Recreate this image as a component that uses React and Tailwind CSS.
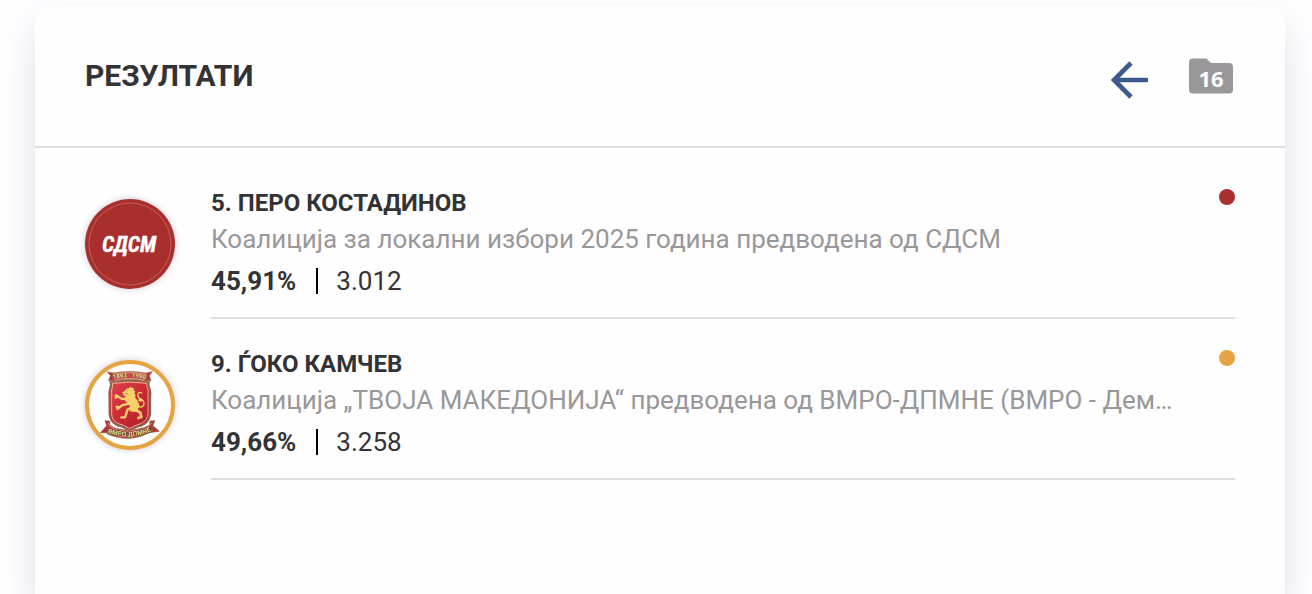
import React from "react";

function SdsmLogo() {
  return (
    <svg viewBox="0 0 90 90" className="size-full" role="img" aria-label="СДСМ">
      <circle cx="45" cy="45" r="45" fill="#a92f2e" />
      <circle cx="45" cy="45" r="41" fill="none" stroke="#cf7f78" strokeWidth="0.6" />
      <text
        x="44"
        y="53"
        textAnchor="middle"
        fill="#fff"
        stroke="#fff"
        strokeWidth="0.4"
        fontFamily="'Roboto Condensed', Roboto, sans-serif"
        fontSize="22"
        fontWeight="700"
        fontStyle="italic"
      >
        СДСМ
      </text>
    </svg>
  );
}

function VmroLogo() {
  return (
    <svg viewBox="30 30 270 270" className="size-full" role="img" aria-label="ВМРО-ДПМНЕ">
      <defs>
        <linearGradient id="shield" x1="0" y1="0" x2="1" y2="1">
          <stop offset="0" stopColor="#e0434a" />
          <stop offset="0.5" stopColor="#c92a35" />
          <stop offset="1" stopColor="#a91f2a" />
        </linearGradient>
        <path id="top-ribbon" d="M112 88Q164 76 214 88" />
        <path id="bottom-ribbon" d="M96 248Q164 273 230 243" />
      </defs>
      <circle cx="165" cy="165" r="129" fill="#fff" stroke="#e3a441" strokeWidth="12" />

      {/* Shield */}
      <path
        d="M106 96Q164 88 222 96Q218 106 225 118Q228 128 226 145V190Q225 216 202 226Q178 231 164 243Q150 231 126 226Q104 216 103 190V145Q101 128 104 118Q110 106 106 96Z"
        fill="url(#shield)"
        stroke="#8a6a52"
        strokeWidth="5"
      />
      <path
        d="M112 100Q164 93 216 100Q213 108 219 120V190Q218 210 200 220Q178 226 164 236Q150 226 128 220Q110 210 110 190V120Q115 108 112 100Z"
        fill="none"
        stroke="#eccfa8"
        strokeWidth="2.5"
      />

      {/* Lion */}
      <g fill="#f8d06a">
        <path d="M151 121l4-5 7-1 3-5 5 3 7 1-1 6 5 5-3 5 4 6-2 6 6 8 6 11 1 11-8 7-14-2-7-8-4-9-8-4-3-11 3-7-8-2 1-5-4-4 5-2Z" />
        <g fill="none" stroke="#f8d06a" strokeWidth="7" strokeLinecap="round" strokeLinejoin="round">
          <path d="M159 146L141 147L127 138M127 138L122 136M127 139L122 143" />
          <path d="M164 161L143 165L132 173M132 173L125 170M132 173L127 177" />
          <path d="M171 171L157 179L154 191L150 202H139" />
          <path d="M184 171L182 180L196 188L199 201L190 204" strokeWidth="8" />
          <path
            d="M190 170Q208 174 207 159Q206 150 198 148Q189 144 188 136Q189 124 200 129"
            strokeWidth="4"
          />
        </g>
        <path d="M169 168L186 166L190 180L180 186L163 184Z" />
        <path d="M199 145l-12 5 9 5 9-3Z" />
      </g>
      <path d="M157 122h2M152 130l6 1" stroke="#9b4028" strokeWidth="2" />

      {/* Top ribbon */}
      <g stroke="#94694a" strokeWidth="2" strokeLinejoin="round">
        <path d="M118 70L97 65L106 77L101 92H118Z" fill="#b83236" />
        <path d="M210 70L232 65L223 77L228 92H210Z" fill="#b83236" />
        <path d="M111 70Q164 59 217 70L212 94Q164 83 116 94Z" fill="#c7454a" />
      </g>
      <path d="M114 73Q164 63 214 73M119 91Q164 80 209 91" fill="none" stroke="#ecd297" strokeWidth="2" />
      <text
        fill="#f7e0a2"
        stroke="#6b432c"
        strokeWidth="2"
        paintOrder="stroke"
        fontFamily="Roboto, sans-serif"
        fontSize="18"
        fontWeight="700"
      >
        <textPath href="#top-ribbon" startOffset="50%" textAnchor="middle">
          1893 · 1990
        </textPath>
      </text>

      {/* Bottom ribbon */}
      <g stroke="#8d6347" strokeWidth="2" strokeLinejoin="round">
        <path d="M104 213L90 212L95 227L76 248L106 249Z" fill="#b0303a" />
        <path d="M225 213L239 212L234 227L253 244L222 248Z" fill="#b0303a" />
        <path d="M97 213Q104 229 122 235Q164 246 206 233Q226 227 232 213L232 244Q165 282 97 252Z" fill="#bd333d" />
      </g>
      <path
        d="M100 220Q107 234 122 239Q164 249 206 237Q224 231 229 219M98 249Q165 277 230 241"
        fill="none"
        stroke="#ead09c"
        strokeWidth="2"
      />
      <text
        fill="#f4db91"
        stroke="#4b3a26"
        strokeWidth="3"
        paintOrder="stroke"
        fontFamily="Roboto, sans-serif"
        fontSize="20"
        fontWeight="700"
      >
        <textPath href="#bottom-ribbon" startOffset="50%" textAnchor="middle">
          ВМРО·ДПМНЕ
        </textPath>
      </text>
    </svg>
  );
}

const results = [
  {
    id: 5,
    name: "ПЕРО КОСТАДИНОВ",
    party: "Коалиција за локални избори 2025 година предводена од СДСМ",
    percent: "45,91%",
    votes: "3.012",
    dot: "bg-[#a92f2e]",
    Logo: SdsmLogo,
  },
  {
    id: 9,
    name: "ЃОКО КАМЧЕВ",
    party: "Коалиција „ТВОЈА МАКЕДОНИЈА“ предводена од ВМРО-ДПМНЕ (ВМРО - Дем…",
    percent: "49,66%",
    votes: "3.258",
    dot: "bg-[#e3a441]",
    Logo: VmroLogo,
  },
];

function ResultRow({ item }) {
  const { id, name, party, percent, votes, dot, Logo } = item;
  return (
    <li className="flex gap-9">
      <div className="mt-[41px] size-[90px] shrink-0 rounded-full shadow-[0_0_6px_rgba(60,30,80,0.25)]">
        <Logo />
      </div>
      <div className="flex min-w-0 flex-1 items-start border-b-2 border-[#dedede] pt-[29px] pb-[18px]">
        <div className="min-w-0 flex-1">
          <h3 className="text-[24px] leading-8 font-bold">
            {id}. {name}
          </h3>
          <p className="truncate pt-0.5 text-[26px] leading-9 text-[#999799]">{party}</p>
          <div className="flex items-center pt-1.5 text-[26px] leading-9">
            <span className="font-bold">{percent}</span>
            <span className="mr-[18px] ml-5 h-[26px] w-0.5 bg-black" />
            <span>{votes}</span>
          </div>
        </div>
        <span className={`mt-0.5 ml-11 size-4 shrink-0 rounded-full ${dot}`} />
      </div>
    </li>
  );
}

export default function App() {
  return (
    <div className="min-h-screen bg-[#fefdff] pt-1.5 pr-[27px] pl-[35px] font-['Roboto',sans-serif] text-[#333335]">
      <main className="min-h-[calc(100vh-6px)] rounded-t-[18px] bg-[#fefefe] shadow-[0_20px_36px_rgba(50,30,70,0.13)]">
        <header className="flex items-start justify-between border-b-2 border-[#dedede] px-[50px] pt-12 pb-[47px]">
          <h1 className="text-[30px] leading-[44px] font-bold">РЕЗУЛТАТИ</h1>
          <div className="flex items-start gap-10 pr-0.5">
            <button type="button" aria-label="Назад" className="pt-[7px]">
              <svg viewBox="0 0 38 38" className="size-[38px]" fill="none" stroke="#3c5a8a" strokeWidth="4.6">
                <path d="M20 2L3 19L20 36M3 19H37" />
              </svg>
            </button>
            <button
              type="button"
              className="relative mt-1 flex h-9 w-11 items-center justify-center pt-1 font-['Noto_Sans',sans-serif] text-[22px] leading-none font-bold text-white"
            >
              <svg viewBox="0 0 44 36" className="absolute inset-0 size-full" fill="#999799">
                <path d="M4 0.5H17.5L22 5H40Q44 5 44 9V31.5Q44 35.5 40 35.5H4Q0 35.5 0 31.5V4.5Q0 0.5 4 0.5Z" />
              </svg>
              <span className="relative">16</span>
            </button>
          </div>
        </header>
        <ul className="flex flex-col px-[50px] pt-2.5">
          {results.map((item) => (
            <ResultRow key={item.id} item={item} />
          ))}
        </ul>
      </main>
    </div>
  );
}
